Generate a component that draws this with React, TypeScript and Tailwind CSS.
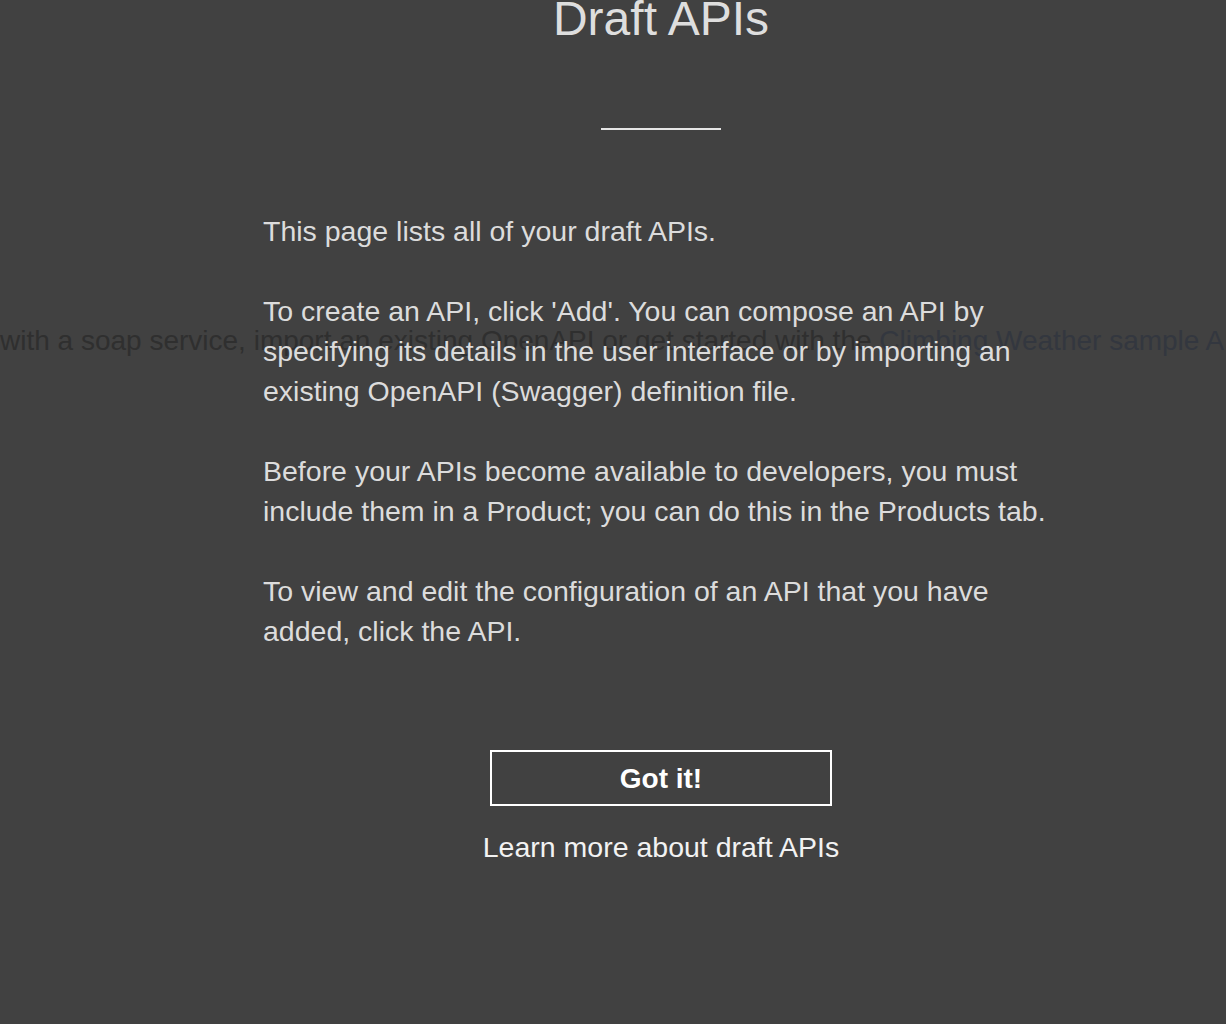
export default function App() {
  return (
    <div
      className="relative h-[1024px] w-full overflow-hidden bg-[#414141]"
      style={{ fontFamily: '"Liberation Sans", Arial, sans-serif' }}
    >
      {/* page behind the modal */}
      <div className="whitespace-nowrap pt-[321px] text-[28px] leading-[40px] text-[#2f2f2f]">
        with a soap service, import an existing OpenAPI or get started with the{" "}
        <span className="text-[#33373f]">Climbing Weather sample API</span>
      </div>

      {/* onboarding overlay */}
      <div className="absolute inset-0 flex flex-col items-center pl-[96px]">
        <h1 className="mt-[-5px] text-[48px] leading-[48px] font-normal text-[#dedede]">
          Draft APIs
        </h1>
        <div className="mt-[85px] h-[2px] w-[120px] bg-[#e6e6e6]" />

        <div className="mt-[81px] w-[796px] text-[28.5px] leading-[40px] text-[#dcdcdc]">
          <p className="mb-[40px]">This page lists all of your draft APIs.</p>
          <p className="mb-[40px]">
            To create an API, click 'Add'. You can compose an API by specifying
            its details in the user interface or by importing an existing
            OpenAPI (Swagger) definition file.
          </p>
          <p className="mb-[40px]">
            Before your APIs become available to developers, you must include
            them in a Product; you can do this in the Products tab.
          </p>
          <p>
            To view and edit the configuration of an API that you have added,
            click the API.
          </p>
        </div>

        <button className="mt-[99px] h-[56px] w-[342px] border-2 border-white pt-[2px] text-[28px] font-bold text-white">
          Got it!
        </button>
        <a className="mt-[21px] text-[28.5px] leading-[40px] text-[#f2f2f2]">
          Learn more about draft APIs
        </a>
      </div>
    </div>
  );
}
